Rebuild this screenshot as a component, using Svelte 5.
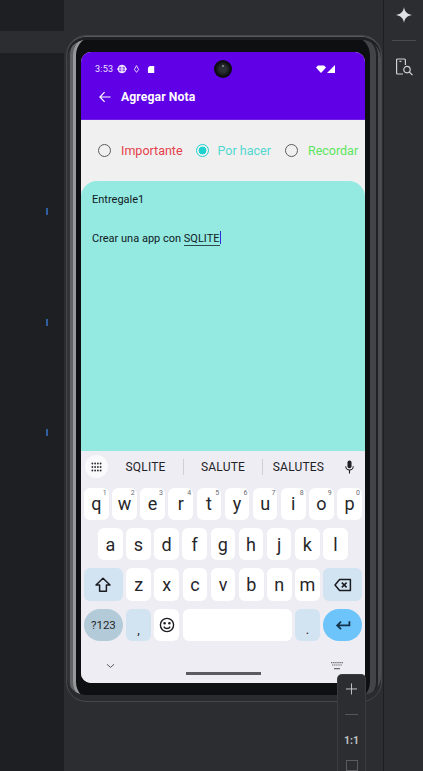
<script lang="ts">
	const row1 = [['q', '1'], ['w', '2'], ['e', '3'], ['r', '4'], ['t', '5'], ['y', '6'], ['u', '7'], ['i', '8'], ['o', '9'], ['p', '0']];
	const row2 = ['a', 's', 'd', 'f', 'g', 'h', 'j', 'k', 'l'];
	const row3 = ['z', 'x', 'c', 'v', 'b', 'n', 'm'];
	const options = [
		{ label: 'Importante', tone: 'red', checked: false },
		{ label: 'Por hacer', tone: 'teal', checked: true },
		{ label: 'Recordar', tone: 'green', checked: false }
	];
	const suggestions = ['SQLITE', 'SALUTE', 'SALUTES'];
</script>

<div class="ide">
	<aside class="side">
		<div class="side-row"></div>
		<span class="mark m1"></span>
		<span class="mark m2"></span>
		<span class="mark m3"></span>
	</aside>

	<main class="stage">
		<div class="device">
			<div class="screen">
				<header class="appbar">
					<div class="status">
						<span class="time">3:53</span>
						<svg class="st-globe" viewBox="0 0 10 10" fill="none" stroke="#fff" stroke-width="1"><circle cx="5" cy="5" r="3.8" /><path d="M0 5h10M2 2.8h6M2 7.2h6M5 1.2v7.6" /></svg>
						<svg class="st-drop" viewBox="0 0 8 10" fill="none" stroke="#fff" stroke-width="1"><path d="M4 .8 6.6 5.6 4 9.2 1.4 5.6z" /></svg>
						<svg class="st-card" viewBox="0 0 8 10"><path d="M2.6 1H7.6V9H.6V3z" fill="#fff" /></svg>
						<span class="spacer"></span>
						<svg class="st-wifi" viewBox="0 0 10 8"><path d="M0 2.4 2 .4h6l2 2L5 8z" fill="#fff" /></svg>
						<svg class="st-signal" viewBox="0 0 8 8"><path d="M8 0v8H0z" fill="#fff" /></svg>
					</div>
					<div class="titlebar">
						<svg class="back" viewBox="0 0 12 12" fill="none" stroke="#fff" stroke-width="1.2"><path d="M11.5 6H1M5.6 1.2.9 6l4.7 4.8" /></svg>
						<span class="title">Agregar Nota</span>
					</div>
					<span class="camera"><span class="glint"></span></span>
				</header>

				<div class="radios">
					{#each options as opt}
						<label class="radio {opt.tone}">
							<span class="dot" class:on={opt.checked}></span>
							<span>{opt.label}</span>
						</label>
					{/each}
				</div>

				<section class="note">
					<p>Entregale1</p>
					<p class="body">Crear una app con <span class="word">SQLITE</span><span class="caret"></span></p>
				</section>

				<section class="keyboard">
					<div class="suggest">
						<span class="apps">
							<svg viewBox="0 0 12 10" fill="#2a2a2e"><circle cx="1.5" cy="1.2" r="1" /><circle cx="4.5" cy="1.2" r="1" /><circle cx="7.5" cy="1.2" r="1" /><circle cx="10.5" cy="1.2" r="1" /><circle cx="1.5" cy="5" r="1" /><circle cx="4.5" cy="5" r="1" /><circle cx="7.5" cy="5" r="1" /><circle cx="10.5" cy="5" r="1" /><circle cx="1.5" cy="8.8" r="1" /><circle cx="4.5" cy="8.8" r="1" /><circle cx="7.5" cy="8.8" r="1" /><circle cx="10.5" cy="8.8" r="1" /></svg>
						</span>
						{#each suggestions as word, i}
							<span class="word-slot" class:sep={i > 0}>{word}</span>
						{/each}
						<svg class="mic" viewBox="0 0 12 14" fill="#1f1f24"><rect x="3.8" y="0" width="4.4" height="8.4" rx="2.2" /><path d="M1.4 6.2h1.1a3.5 3.5 0 0 0 7 0h1.1a4.6 4.6 0 0 1-4 4.5V14H5.4v-3.3a4.6 4.6 0 0 1-4-4.5z" /></svg>
					</div>

					<div class="keys">
						<div class="row">
							{#each row1 as [k, n]}
								<span class="key">{k}<sup>{n}</sup></span>
							{/each}
						</div>
						<div class="row inset">
							{#each row2 as k}
								<span class="key">{k}</span>
							{/each}
						</div>
						<div class="row">
							<span class="key wide tint">
								<svg class="ic" viewBox="0 0 18 18" fill="none" stroke="#1c1c20" stroke-width="1.5" stroke-linejoin="round"><path d="M9 2.2 16 9h-3.6v6.2H5.6V9H2z" /></svg>
							</span>
							{#each row3 as k}
								<span class="key">{k}</span>
							{/each}
							<span class="key wide tint">
								<svg class="ic" viewBox="0 0 18 18" fill="none" stroke="#1c1c20" stroke-width="1.5" stroke-linejoin="round"><path d="M5.6 3.4H16.4v11.2H5.6L1 9z" /><path d="m7.8 6.6 4.8 4.8m0-4.8-4.8 4.8" /></svg>
							</span>
						</div>
						<div class="row">
							<span class="key wide pill">?123</span>
							<span class="key tint small">,</span>
							<span class="key">
								<svg class="ic" viewBox="0 0 18 18" fill="none" stroke="#1c1c20" stroke-width="1.4"><circle cx="9" cy="9" r="6.6" /><path d="M5.8 10.6a3.6 3.6 0 0 0 6.4 0" /><circle cx="6.6" cy="7.2" r=".6" fill="#1c1c20" /><circle cx="11.4" cy="7.2" r=".6" fill="#1c1c20" /></svg>
							</span>
							<span class="key space"></span>
							<span class="key tint small">.</span>
							<span class="key wide enter">
								<svg class="ic" viewBox="0 0 18 18" fill="none" stroke="#12324a" stroke-width="1.8"><path d="M15.4 5.2v4.2H3.4M7 5.6 3.2 9.4 7 13.2" /></svg>
							</span>
						</div>
					</div>

					<div class="navbar">
						<svg class="hide" viewBox="0 0 10 6" fill="none" stroke="#55555c" stroke-width="1.1"><path d="m1 1 4 3.6L9 1" /></svg>
						<span class="pillbar"></span>
						<svg class="kbd" viewBox="0 0 12 8" fill="#6c6c72"><path d="M0 0h1.4v1.2H0zM2.1 0h1.4v1.2H2.1zM4.2 0h1.4v1.2H4.2zM6.3 0h1.4v1.2H6.3zM8.4 0h1.4v1.2H8.4zM10.5 0H12v1.2h-1.5zM1 2.4h1.4v1.2H1zM3.1 2.4h1.4v1.2H3.1zM5.2 2.4h1.4v1.2H5.2zM7.3 2.4h1.4v1.2H7.3zM9.4 2.4h1.4v1.2H9.4zM3 6h6v1.2H3z" /></svg>
					</div>
				</section>
			</div>
		</div>
	</main>

	<nav class="rail">
		<svg class="spark" viewBox="0 0 16 16"><path d="M8 0c.6 4.6 2.8 7 8 8-5.2 1-7.4 3.4-8 8-.6-4.6-2.8-7-8-8 5.2-1 7.4-3.4 8-8z" fill="#dfe1e5" /></svg>
		<span class="rail-line"></span>
		<svg class="inspect" viewBox="0 0 18 18" fill="none" stroke="#cfd1d5" stroke-width="1.2"><path d="M8 16H2.6a1 1 0 0 1-1-1V2a1 1 0 0 1 1-1h6.8a1 1 0 0 1 1 1v5" /><path d="M4.4 3.4h2" /><circle cx="12" cy="11.6" r="3.2" /><path d="m14.3 14 3.2 3.2" /></svg>
	</nav>

	<div class="zoombar">
		<svg viewBox="0 0 14 14" fill="none" stroke="#c8cacd" stroke-width="1.1"><path d="M7 .5v13M.5 7h13" /></svg>
		<span class="minus"></span>
		<span class="one">1:1</span>
		<span class="fit"><span></span></span>
	</div>
</div>

<style>
	:global(body) {
		margin: 0;
		background: #2b2d30;
		overflow: hidden;
	}

	.ide {
		position: relative;
		display: flex;
		width: 423px;
		height: 771px;
		overflow: hidden;
		background: #2b2d30;
		font-family: Roboto, "Liberation Sans", sans-serif;
	}

	.side {
		position: relative;
		width: 64px;
		flex: none;
		padding-top: 31px;
		box-sizing: border-box;
		background: #1e1f22;
	}

	.side-row {
		height: 22px;
		background: #2b2d30;
	}

	.mark {
		position: absolute;
		left: 46px;
		width: 2px;
		height: 7px;
		background: #2f5f9e;
	}
	.m1 { top: 208px; }
	.m2 { top: 319px; }
	.m3 { top: 429px; }

	.stage {
		width: 319px;
		flex: none;
		padding: 35px 0 0 2px;
		box-sizing: border-box;
	}

	.device {
		width: 316px;
		height: 667px;
		box-sizing: border-box;
		padding: 16px 16px 18px 14px;
		border: 1px solid #46474a;
		border-radius: 20px;
		background: #0e0f10;
		box-shadow:
			inset 0 1px 0 #58595c,
			inset 0 4px 0 #1f2023,
			inset 0 -6px 0 #2a2b2e,
			inset 3px 0 0 #333437,
			inset 6px 0 0 #606164,
			inset 9px 0 0 #97989a,
			inset -3px 0 0 #4b4c4f,
			inset -5px 0 0 #202124,
			inset -11px 0 0 #434447;
	}

	.screen {
		display: flex;
		flex-direction: column;
		width: 284px;
		height: 631px;
		border-radius: 10px;
		overflow: hidden;
		background: #f0f0f0;
	}

	.appbar {
		position: relative;
		height: 68px;
		flex: none;
		background: #5f00e6;
		color: #fff;
		border-bottom: 1px solid #6d1fe8;
		box-sizing: border-box;
	}

	.status {
		display: flex;
		align-items: center;
		height: 34px;
		padding: 0 30px 0 14px;
	}

	.time {
		width: 22px;
		font-size: 9px;
		letter-spacing: 0.2px;
		color: #efe6ff;
	}

	.st-globe { width: 10px; height: 10px; }
	.st-drop { width: 7px; height: 8px; margin-left: 6px; }
	.st-card { width: 8px; height: 9px; margin-left: 7px; }
	.spacer { flex: 1; }
	.st-wifi { width: 10px; height: 8px; }
	.st-signal { width: 8px; height: 8px; margin-left: 1px; }

	.titlebar {
		display: flex;
		align-items: center;
		height: 22px;
		padding-left: 18px;
	}

	.back { width: 12px; height: 12px; }

	.title {
		margin-left: 10px;
		font-size: 12.2px;
		font-weight: 700;
		letter-spacing: 0.1px;
	}

	.camera {
		position: absolute;
		left: 133px;
		top: 8px;
		width: 18px;
		height: 18px;
		border-radius: 50%;
		background: radial-gradient(circle at 50% 50%, #2a2f35 0 25%, #0b0c0f 60%);
	}

	.glint {
		position: absolute;
		left: 8px;
		top: 5px;
		width: 2px;
		height: 2px;
		border-radius: 50%;
		background: #8a9097;
	}

	.radios {
		display: flex;
		align-items: center;
		height: 61px;
		flex: none;
		padding-left: 17px;
		box-sizing: border-box;
	}

	.radio {
		display: flex;
		align-items: center;
		gap: 10px;
		font-size: 12.5px;
	}
	.radio:nth-child(2) { margin-left: 13px; gap: 9px; }
	.radio:nth-child(3) { margin-left: 14px; }
	.red { color: #e5404a; }
	.teal { color: #52d8d0; }
	.green { color: #5ce65f; }

	.dot {
		width: 13px;
		height: 13px;
		box-sizing: border-box;
		border: 1.5px solid #5c5c60;
		border-radius: 50%;
	}

	.dot.on {
		border-color: #1fd2ce;
		background: radial-gradient(circle, #1fd2ce 0 3.6px, transparent 4.2px);
	}

	.note {
		flex: none;
		height: 270px;
		padding: 12px 11px 0;
		box-sizing: border-box;
		border-radius: 16px 16px 0 0;
		background: #94e9e0;
		font-size: 11px;
		color: #10201f;
	}

	.note p {
		margin: 0;
		line-height: 14px;
	}

	.note .body {
		margin-top: 24px;
	}

	.word {
		border-bottom: 1px solid #2f4a4a;
	}

	.caret {
		display: inline-block;
		width: 1px;
		height: 13px;
		margin-bottom: -2px;
		background: #2b2be0;
	}

	.keyboard {
		display: flex;
		flex-direction: column;
		flex: 1;
		min-height: 0;
		background: #eeedf3;
	}

	.suggest {
		display: flex;
		align-items: center;
		height: 36.5px;
		flex: none;
		padding: 0 10px 5px 4px;
		box-sizing: border-box;
	}

	.apps {
		display: grid;
		place-items: center;
		width: 23px;
		height: 23px;
		flex: none;
		border-radius: 50%;
		background: #fafafc;
	}

	.apps svg { width: 11px; height: 10px; }

	.word-slot {
		display: flex;
		align-items: center;
		justify-content: center;
		box-sizing: border-box;
		width: 75px;
		height: 16px;
		font-size: 12px;
		letter-spacing: 0.2px;
		color: #222226;
	}

	.word-slot.sep {
		width: 79px;
		border-left: 1px solid #cfcfd6;
	}

	.word-slot.sep:last-of-type {
		width: 72px;
	}

	.mic {
		width: 11px;
		height: 14px;
		margin-left: auto;
	}

	.keys {
		display: flex;
		flex-direction: column;
		gap: 7.8px;
		flex: none;
		padding: 0 3px;
	}

	.row {
		display: flex;
		gap: 3.5px;
		height: 32.6px;
	}

	.row.inset {
		padding: 0 14px;
	}

	.key {
		position: relative;
		display: flex;
		align-items: center;
		justify-content: center;
		width: 24.65px;
		flex: none;
		border-radius: 6px;
		background: #fff;
		font-size: 18px;
		color: #26262a;
	}

	.key sup {
		position: absolute;
		top: 2px;
		right: 2px;
		font-size: 7px;
		line-height: 1;
		color: #6a6a70;
	}

	.wide { width: 38.8px; }
	.tint { background: #d2e4f2; }
	.small { font-size: 13px; padding-top: 10px; box-sizing: border-box; }
	.space { flex: 1; width: auto; }

	.pill {
		border-radius: 16px;
		background: #b3cbd9;
		font-size: 11.5px;
	}

	.enter {
		border-radius: 16px;
		background: #6cc4fb;
	}

	.ic {
		width: 18px;
		height: 18px;
	}

	.navbar {
		position: relative;
		flex: 1;
	}

	.hide {
		position: absolute;
		left: 25px;
		top: 22px;
		width: 9px;
		height: 6px;
	}

	.pillbar {
		position: absolute;
		left: 105px;
		top: 31px;
		width: 75px;
		height: 3px;
		background: #5a5a60;
	}

	.kbd {
		position: absolute;
		left: 250px;
		top: 21px;
		width: 12px;
		height: 8px;
	}

	.rail {
		display: flex;
		flex-direction: column;
		align-items: center;
		flex: 1;
		padding-top: 7px;
		border-left: 1px solid #1e1f22;
	}

	.spark { width: 16px; height: 16px; }

	.rail-line {
		width: 24px;
		height: 1px;
		margin-top: 17px;
		background: #4a4b4f;
	}

	.inspect {
		width: 18px;
		height: 18px;
		margin-top: 17px;
	}

	.zoombar {
		position: absolute;
		left: 338px;
		top: 675px;
		display: flex;
		flex-direction: column;
		align-items: center;
		width: 27px;
		height: 96px;
		box-sizing: border-box;
		padding-top: 8px;
		border-radius: 4px 4px 0 0;
		background: #2b2d30;
		box-shadow: 0 0 0 1px #3a3b3f;
	}

	.zoombar svg { width: 13px; height: 13px; }

	.minus {
		width: 13px;
		height: 1px;
		margin-top: 19px;
		background: #55575b;
	}

	.one {
		margin-top: 19px;
		font-size: 10.5px;
		font-weight: 700;
		color: #c0c2c5;
	}

	.fit {
		width: 12px;
		height: 12px;
		margin-top: 13px;
		border: 1px solid #5a5c60;
		box-sizing: border-box;
	}
</style>
